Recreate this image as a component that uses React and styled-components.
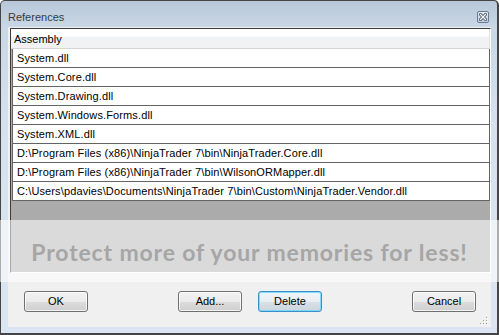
import React from "react";
import styled, { createGlobalStyle } from "styled-components";

const Global = createGlobalStyle`
  html, body { margin: 0; padding: 0; background: #ffffff; }
  body { width: 499px; height: 335px; overflow: hidden; font-family: "Liberation Sans", Arial, sans-serif; }
`;

const Window = styled.div`
  position: relative;
  width: 499px;
  height: 335px;
  box-sizing: border-box;
  border-style: solid;
  border-color: #454545;
  border-width: 1px 2px 2px 1px;
  border-radius: 5px 5px 0 0;
  background: linear-gradient(to bottom, #b8c8d9 0px, #c9d7e6 26px, #d5e1ee 120px, #dce6f2 100%);
  display: flex;
  flex-direction: column;
`;

const TitleBar = styled.div`
  height: 26px;
  flex: none;
  box-sizing: border-box;
  padding: 6px 8px 0 7px;
  display: flex;
  align-items: center;
  justify-content: space-between;
`;

const Title = styled.span`
  font-size: 11px;
  line-height: 14px;
  color: #3a3a3a;
`;

const CloseButton = styled.div`
  width: 12px;
  height: 12px;
  box-sizing: border-box;
  border: 1px solid #6a7a92;
  border-radius: 2px;
  background: linear-gradient(to bottom, #e4ebf3, #c3d0df);
  display: flex;
  align-items: center;
  justify-content: center;
`;

const Client = styled.div`
  position: relative;
  flex: 1;
  margin: 0 6px 6px 7px;
  background: #f0f0f0;
  padding: 1px 0 0 2px;
  display: flex;
  flex-direction: column;
`;

const Grid = styled.div`
  height: 245px;
  flex: none;
  box-sizing: border-box;
  border-style: solid;
  border-width: 1px;
  border-color: #3c3c3c #ffffff #ffffff #3c3c3c;
  background: #ababab;
  display: flex;
  flex-direction: column;
  overflow: hidden;
`;

const HeaderCell = styled.div`
  height: 20px;
  flex: none;
  box-sizing: border-box;
  border-bottom: 1px solid #d5d5d5;
  border-right: 1px solid #e2e2e2;
  background: linear-gradient(to bottom, #ffffff 0px, #ffffff 7px, #f1f2f3 8px, #f1f2f3 100%);
  padding: 1px 0 0 3px;
  font-size: 11px;
  line-height: 18px;
  color: #000;
`;

const Row = styled.div`
  height: 19px;
  flex: none;
  box-sizing: border-box;
  margin-left: 1px;
  border-left: 1px solid #646464;
  border-right: 1px solid #646464;
  border-bottom: 1px solid #646464;
  background: #ffffff;
  padding-left: 4px;
  font-size: 11px;
  line-height: 18px;
  letter-spacing: 0.12px;
  color: #000;
  white-space: nowrap;
`;

const ButtonBar = styled.div`
  margin-top: 18px;
  height: 21px;
  display: grid;
  grid-template-columns: 1fr auto 1fr;
  padding: 0 15px 0 14px;
`;

const Group = styled.div`
  display: flex;
  gap: 16px;
  justify-content: ${(p) => p.$align || "flex-start"};
`;

const Button = styled.div`
  width: 64px;
  height: 21px;
  box-sizing: border-box;
  border: 1px solid ${(p) => (p.$focused ? "#3a8fcb" : "#707070")};
  border-radius: 3px;
  background: ${(p) =>
    p.$focused
      ? "linear-gradient(to bottom, #f0f5f9 0%, #e8eef3 50%, #d8e1e8 51%, #cbd5dd 100%)"
      : "linear-gradient(to bottom, #f2f2f2 0%, #ebebeb 50%, #dddddd 51%, #cfcfcf 100%)"};
  box-shadow: inset 0 0 0 1px ${(p) => (p.$focused ? "rgba(110,215,250,0.85)" : "rgba(255,255,255,0.75)")};
  font-size: 11px;
  line-height: 19px;
  text-align: center;
  color: #000;
`;

const SizeGrip = styled.svg`
  position: absolute;
  right: 2px;
  bottom: 1px;
`;

const Watermark = styled.div`
  position: absolute;
  left: -1px;
  right: -2px;
  top: 219px;
  height: 62px;
  background: rgba(255, 255, 255, 0.56);
  display: flex;
  align-items: center;
  justify-content: center;
  pointer-events: none;
`;

const WatermarkText = styled.span`
  font-family: Lato, "Open Sans", sans-serif;
  font-weight: 700;
  font-size: 23px;
  letter-spacing: 0.85px;
  color: #a6a6a6;
  white-space: nowrap;
  padding-top: 1px;
`;

const rows = [
  "System.dll",
  "System.Core.dll",
  "System.Drawing.dll",
  "System.Windows.Forms.dll",
  "System.XML.dll",
  "D:\\Program Files (x86)\\NinjaTrader 7\\bin\\NinjaTrader.Core.dll",
  "D:\\Program Files (x86)\\NinjaTrader 7\\bin\\WilsonORMapper.dll",
  "C:\\Users\\pdavies\\Documents\\NinjaTrader 7\\bin\\Custom\\NinjaTrader.Vendor.dll",
];

export default function App() {
  return (
    <>
      <Global />
      <Window>
        <TitleBar>
          <Title>References</Title>
          <CloseButton>
            <svg width="8" height="8" viewBox="0 0 8 8">
              <path d="M1.5 1.5 L6.5 6.5 M6.5 1.5 L1.5 6.5" stroke="#3b4a5e" strokeWidth="3" strokeLinecap="square" />
              <path d="M1.5 1.5 L6.5 6.5 M6.5 1.5 L1.5 6.5" stroke="#ffffff" strokeWidth="1.3" strokeLinecap="square" />
            </svg>
          </CloseButton>
        </TitleBar>
        <Client>
          <Grid>
            <HeaderCell>Assembly</HeaderCell>
            {rows.map((r) => (
              <Row key={r}>{r}</Row>
            ))}
          </Grid>
          <ButtonBar>
            <Group>
              <Button>OK</Button>
            </Group>
            <Group>
              <Button>Add...</Button>
              <Button $focused>Delete</Button>
            </Group>
            <Group $align="flex-end">
              <Button>Cancel</Button>
            </Group>
          </ButtonBar>
          <SizeGrip width="10" height="10" viewBox="0 0 10 10">
            {[
              [7, 1],
              [7, 4],
              [4, 4],
              [7, 7],
              [4, 7],
              [1, 7],
            ].map(([x, y]) => (
              <g key={`${x}-${y}`}>
                <rect x={x + 1} y={y + 1} width="1" height="1" fill="#ffffff" />
                <rect x={x} y={y} width="1" height="1" fill="#a0a0a0" />
              </g>
            ))}
          </SizeGrip>
        </Client>
        <Watermark>
          <WatermarkText>Protect more of your memories for less!</WatermarkText>
        </Watermark>
      </Window>
    </>
  );
}
